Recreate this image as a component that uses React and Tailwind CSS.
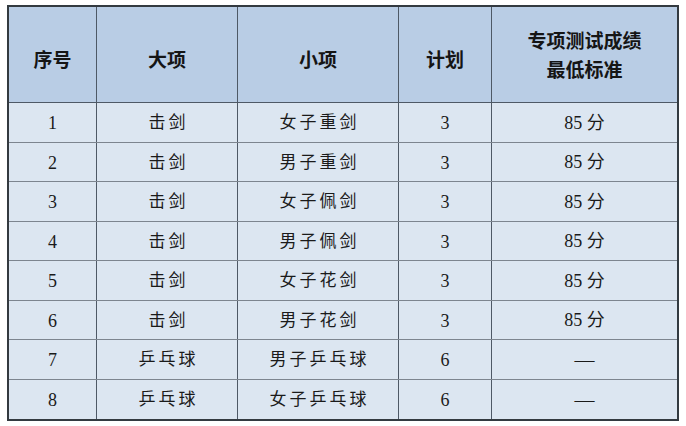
import React from 'react';

// Table of specialty test standards
const rows = [
  { no: '1', major: '击剑', minor: '女子重剑', plan: '3', score: '85 分' },
  { no: '2', major: '击剑', minor: '男子重剑', plan: '3', score: '85 分' },
  { no: '3', major: '击剑', minor: '女子佩剑', plan: '3', score: '85 分' },
  { no: '4', major: '击剑', minor: '男子佩剑', plan: '3', score: '85 分' },
  { no: '5', major: '击剑', minor: '女子花剑', plan: '3', score: '85 分' },
  { no: '6', major: '击剑', minor: '男子花剑', plan: '3', score: '85 分' },
  { no: '7', major: '乒乓球', minor: '男子乒乓球', plan: '6', score: null },
  { no: '8', major: '乒乓球', minor: '女子乒乓球', plan: '6', score: null },
];

const heights = ['h-[40px]', 'h-[39px]', 'h-[40px]', 'h-[39px]', 'h-[40px]', 'h-[39px]', 'h-[40px]', 'h-[39px]'];

const serif = { fontFamily: '"Liberation Serif", "Noto Sans CJK SC", serif' };
const sans = { fontFamily: '"Noto Sans CJK SC", "Noto Sans", sans-serif' };

const App = () => {
  return (
    <div className="w-[686px] h-[426px] bg-white pt-[5px] pl-[7px]">
      <div className="w-[672px] border-2 border-[#333a40] bg-[#dce6f1]">
        {/* Header */}
        <div
          className="grid grid-cols-[88px_141px_161px_93px_185px] h-[96px] bg-[#b9cde5] border-b border-[#4e5966] text-[19px] font-bold text-[#151515]"
          style={sans}
        >
          <div className="flex items-center justify-center border-r border-[#4e5966] pt-[10px]">序号</div>
          <div className="flex items-center justify-center border-r border-[#4e5966] pt-[10px]">大项</div>
          <div className="flex items-center justify-center border-r border-[#4e5966] pt-[10px]">小项</div>
          <div className="flex items-center justify-center border-r border-[#4e5966] pt-[10px]">计划</div>
          <div className="flex flex-col items-center justify-center leading-[29px] pb-[2px]">
            <span>专项测试成绩</span>
            <span>最低标准</span>
          </div>
        </div>

        {/* Body */}
        {rows.map((r, i) => (
          <div
            key={r.no}
            className={`grid grid-cols-[88px_141px_161px_93px_185px] ${heights[i]} ${
              i < rows.length - 1 ? 'border-b border-[#7d858f]' : ''
            } text-[17px] text-[#1a1a1a]`}
            style={serif}
          >
            <div className="flex items-center justify-center border-r border-[#4e5966] text-[18px] pt-[2px]">{r.no}</div>
            <div className="flex items-center justify-center border-r border-[#4e5966] tracking-[3px] pl-[3px] pt-[1px]">{r.major}</div>
            <div className="flex items-center justify-center border-r border-[#4e5966] tracking-[3px] pl-[3px] pt-[1px]">{r.minor}</div>
            <div className="flex items-center justify-center border-r border-[#4e5966] text-[18px] pt-[2px]">{r.plan}</div>
            <div className="flex items-center justify-center pt-[1px]">
              {r.score ? (
                <span className="text-[18px]">{r.score}</span>
              ) : (
                <span className="text-[20px]">—</span>
              )}
            </div>
          </div>
        ))}
      </div>
    </div>
  );
};

export default App;
